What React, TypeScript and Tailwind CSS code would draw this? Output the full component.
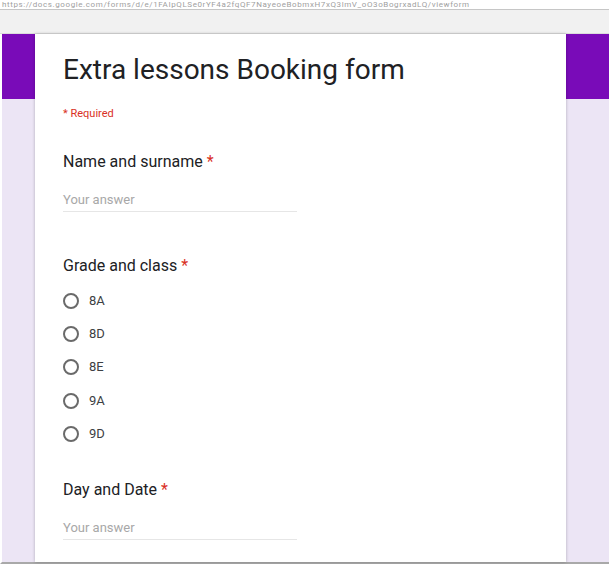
const grades = ["8A", "8D", "8E", "9A", "9D"];

function Label({ text }: { text: string }) {
  return (
    <div className="text-[16px] leading-6 text-[#202124]">
      {text} <span className="text-[#d93025]">*</span>
    </div>
  );
}

function TextAnswer() {
  return (
    <div className="mt-[16px] w-[234px] border-b border-[#e6e6e6] pb-[1px] text-[13px] leading-5 text-[#a8a8a8]">
      Your answer
    </div>
  );
}

function Radio({ label }: { label: string }) {
  return (
    <div className="flex h-[33.3px] items-center gap-[10px]">
      <span className="h-4 w-4 rounded-full border-2 border-[#6a6a6a]" />
      <span className="text-[13px] text-[#3c4043]">{label}</span>
    </div>
  );
}

export default function App() {
  return (
    <div
      className="flex h-[564px] w-[609px] flex-col overflow-hidden bg-white"
      style={{ fontFamily: "Roboto, 'Liberation Sans', sans-serif" }}
    >
      {/* url strip */}
      <div className="h-[10px] border-b border-[#c6c6c6] pl-[2px]">
        <div className="whitespace-nowrap text-[8px] leading-[9px] tracking-[0.6px] text-[#a0a0a0]">
          https://docs.google.com/forms/d/e/1FAIpQLSe0rYF4a2fqQF7NayeoeBobmxH7xQ3lmV_oO3oBogrxadLQ/viewform
        </div>
      </div>
      <div className="h-[24px] border-b border-[#dcdcdc] bg-[#f1f1f1]" />

      <div className="flex flex-1 border-b-2 border-l-2 border-b-[#a9a9a9] border-l-white bg-[linear-gradient(to_bottom,#790bb8_65px,#ece5f5_65px)] pl-[33px]">
        <div className="w-[531px] bg-white px-[28px] pt-[18px] shadow-[0_0_3px_rgba(0,0,0,0.25)]">
          <h1 className="text-[28px] leading-9 text-[#202124]">Extra lessons Booking form</h1>
          <div className="mt-[18px] text-[11px] leading-4 text-[#d93025]">* Required</div>

          <div className="mt-[28px]">
            <Label text="Name and surname" />
            <TextAnswer />
          </div>

          <div className="mt-[42px]">
            <Label text="Grade and class" />
            <div className="mt-[6px]">
              {grades.map((g) => (
                <Radio key={g} label={g} />
              ))}
            </div>
          </div>

          <div className="mt-[28px]">
            <Label text="Day and Date" />
            <TextAnswer />
          </div>
        </div>
      </div>
    </div>
  );
}
